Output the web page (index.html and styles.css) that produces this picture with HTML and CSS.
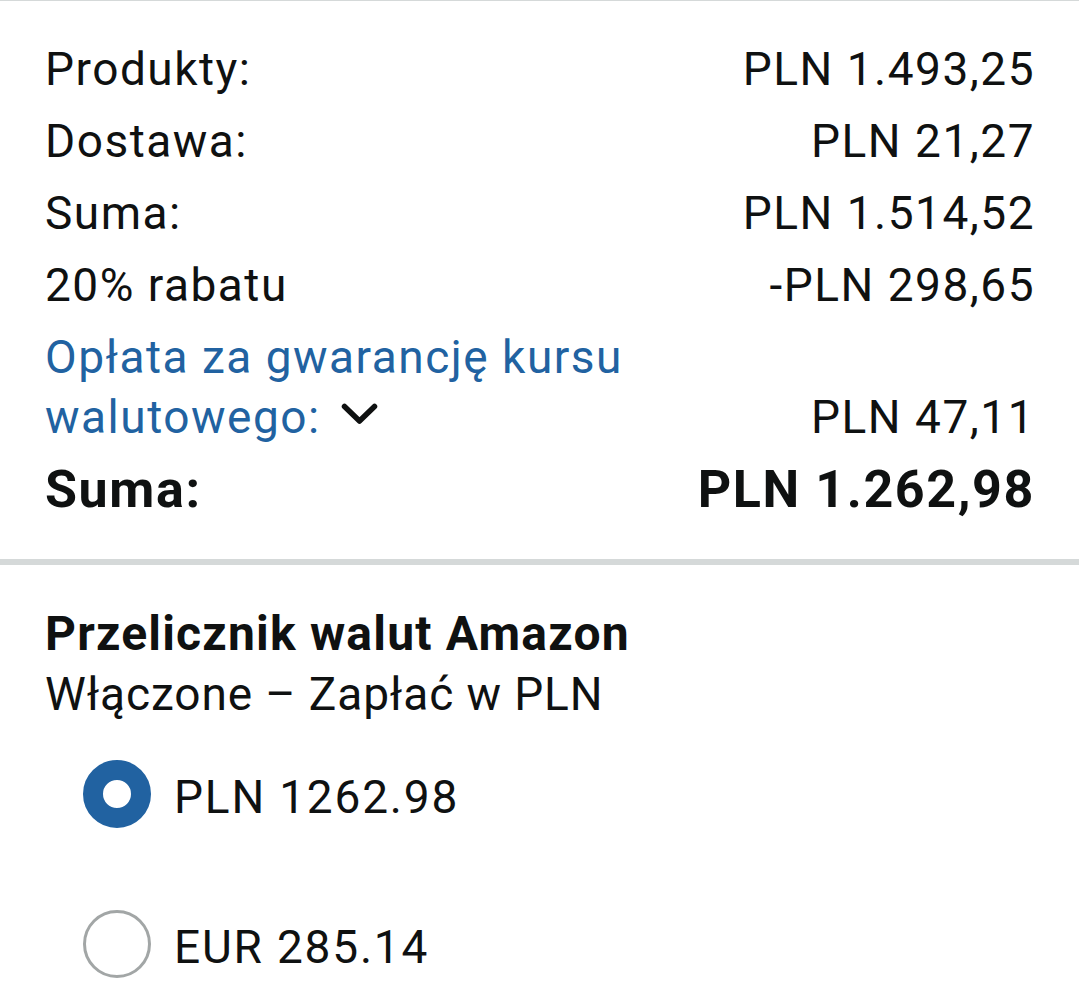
FILE: index.html
```html
<!DOCTYPE html>
<html lang="pl">

<head>
    <meta charset="utf-8">
    <meta name="viewport" content="width=device-width, initial-scale=1">
    <title>Podsumowanie zamówienia</title>
    <link rel="stylesheet" href="styles.css">
</head>

<body>
    <div class="summary">
        <div class="row">
            <span class="label">Produkty:</span>
            <span class="value">PLN 1.493,25</span>
        </div>
        <div class="row">
            <span class="label">Dostawa:</span>
            <span class="value">PLN 21,27</span>
        </div>
        <div class="row">
            <span class="label">Suma:</span>
            <span class="value">PLN 1.514,52</span>
        </div>
        <div class="row">
            <span class="label">20% rabatu</span>
            <span class="value">-PLN 298,65</span>
        </div>
        <div class="row">
            <a class="label link" href="#">Opłata za gwarancję kursu walutowego:<svg class="chevron" width="37" height="22" viewBox="0 0 37 22"><polyline points="3.5,3.5 18.5,18 33.5,3.5" fill="none" stroke="#0f1111" stroke-width="5.5" stroke-linecap="round" stroke-linejoin="round"/></svg></a>
            <span class="value">PLN 47,11</span>
        </div>
        <div class="row total">
            <span class="label">Suma:</span>
            <span class="value">PLN 1.262,98</span>
        </div>
    </div>

    <div class="divider"></div>

    <div class="converter">
        <h3>Przelicznik walut Amazon</h3>
        <p>Włączone – Zapłać w PLN</p>
        <ul class="options">
            <li class="option">
                <span class="radio checked"></span>
                <span class="option-text">PLN 1262.98</span>
            </li>
            <li class="option">
                <span class="radio"></span>
                <span class="option-text">EUR 285.14</span>
            </li>
        </ul>
    </div>
</body>

</html>
```

FILE: styles.css
```css
body {
    -webkit-font-smoothing: antialiased;
    font-family: Roboto, "Noto Sans", Arial, sans-serif;
    font-size: 46px;
    line-height: 60px;
    letter-spacing: 1.5px;
    margin: 0;
    color: #0f1111;
    background: #fff;
}

.summary {
    border-top: 1px solid #d5d9d9;
    padding: 38px 44px 38px 45px;
    display: flex;
    flex-direction: column;
    gap: 12px;
}

.row {
    display: flex;
    justify-content: space-between;
    align-items: flex-end;
}

.row .label {
    flex: 1 1 auto;
    min-width: 0;
}

.row .value {
    flex: none;
    text-align: right;
}

.link {
    color: #2162a1;
    text-decoration: none;
    padding-right: 120px;
}

.chevron {
    margin-left: 20px;
    vertical-align: 8px;
}

.total {
    font-size: 52px;
    font-weight: 700;
    line-height: 62px;
    letter-spacing: 1.6px;
}

.divider {
    height: 6px;
    background: #d5d9d9;
}

.converter {
    padding: 39px 45px;
}

.converter h3 {
    margin: 0;
    font-size: 48px;
    font-weight: 700;
    line-height: 60px;
    letter-spacing: 1.2px;
}

.converter p {
    margin: 0;
    letter-spacing: 0.9px;
}

.options {
    list-style: none;
    margin: 36px 0 0 38px;
    padding: 0;
    display: flex;
    flex-direction: column;
    gap: 82px;
}

.option {
    display: flex;
    align-items: center;
    gap: 23px;
}

.option-text {
    padding-top: 6px;
    letter-spacing: 1.8px;
}

.radio {
    width: 68px;
    height: 68px;
    box-sizing: border-box;
    border-radius: 50%;
    border: 3px solid #a2a6a6;
    background: #fff;
    flex: none;
}

.radio.checked {
    border: 20px solid #2162a1;
}
```
